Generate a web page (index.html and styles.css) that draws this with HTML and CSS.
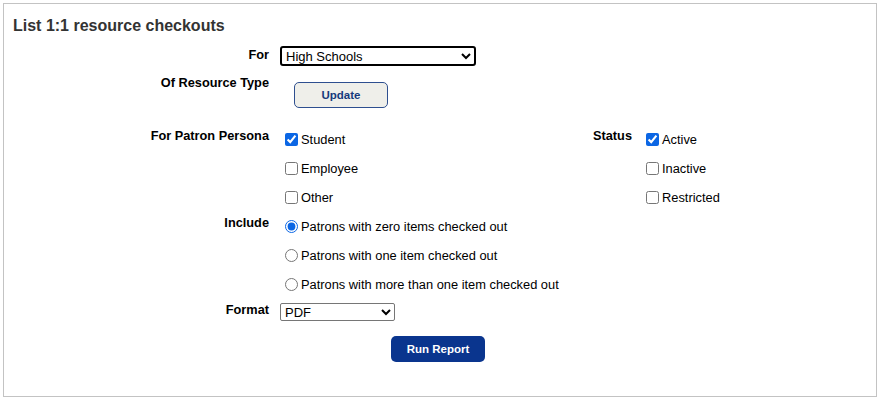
FILE: index.html
```html
<!DOCTYPE html>
<html>
<head>
<meta charset="utf-8">
<link rel="stylesheet" href="styles.css">
</head>
<body>
<div class="panel">
  <h1 class="title">List 1:1 resource checkouts</h1>
  <div class="form">
    <div class="row row-for">
      <div class="label lbl-for">For</div>
      <div class="field">
        <select class="sel sel-focus"><option>High Schools</option></select>
      </div>
    </div>
    <div class="row row-type">
      <div class="label lbl-type">Of Resource Type</div>
      <div class="field">
        <button class="btn-update">Update</button>
      </div>
    </div>
    <div class="row row-persona">
      <div class="label lbl-opt">For Patron Persona</div>
      <div class="opts opts-persona">
        <label class="opt"><input type="checkbox" checked>Student</label>
        <label class="opt"><input type="checkbox">Employee</label>
        <label class="opt"><input type="checkbox">Other</label>
      </div>
      <div class="label lbl-opt lbl-status">Status</div>
      <div class="opts opts-status">
        <label class="opt"><input type="checkbox" checked>Active</label>
        <label class="opt"><input type="checkbox">Inactive</label>
        <label class="opt"><input type="checkbox">Restricted</label>
      </div>
    </div>
    <div class="row row-include">
      <div class="label lbl-opt">Include</div>
      <div class="opts">
        <label class="opt"><input type="radio" name="inc" checked>Patrons with zero items checked out</label>
        <label class="opt"><input type="radio" name="inc">Patrons with one item checked out</label>
        <label class="opt"><input type="radio" name="inc">Patrons with more than one item checked out</label>
      </div>
    </div>
    <div class="row row-format">
      <div class="label lbl-format">Format</div>
      <div class="field">
        <select class="sel sel-format"><option>PDF</option></select>
      </div>
    </div>
    <div class="actions">
      <button class="btn-run">Run Report</button>
    </div>
  </div>
</div>
</body>
</html>
```

FILE: styles.css
```css
html, body {
  margin: 0;
  padding: 0;
  background: #ffffff;
}
body {
  padding: 3px 5px 0 3px;
  font-family: "Liberation Sans", Arial, sans-serif;
  color: #000;
}
.panel {
  border: 1px solid #c3c3c3;
  height: 394px;
  box-sizing: border-box;
  width: 874px;
}
.title {
  margin: 0;
  padding: 12px 0 0 9px;
  font-size: 16px;
  line-height: 20px;
  font-weight: bold;
  color: #333333;
}
.form {
  margin-top: 10px;
}
.row {
  display: flex;
  align-items: flex-start;
}
.label {
  width: 265px;
  flex: none;
  text-align: right;
  font-size: 12.75px;
  font-weight: bold;
  line-height: 14px;
  color: #000;
}
.field, .opts {
  margin-left: 11px;
}
.lbl-for { padding-top: 2px; }
.row-type { margin-top: 10px; }
.lbl-type { padding-top: 0; }
.row-persona { margin-top: 17px; }
.lbl-opt { padding-top: 4px; }
.opts-persona { width: 302px; flex: none; }
.lbl-status { width: auto; margin-left: 11px; }
.opts-status { margin-left: 9px; }
.opt {
  display: flex;
  align-items: center;
  height: 29px;
  font-size: 12.85px;
  line-height: 15px;
  color: #000;
}
.opt input {
  margin: 0 3px 0 5px;
  width: 13px;
  height: 13px;
  accent-color: #0b66e4;
}
.sel {
  font-family: "Liberation Sans", Arial, sans-serif;
  font-size: 13px;
  color: #000;
  background: #fff;
  padding: 0;
  box-sizing: border-box;
}
.sel-focus {
  width: 196px;
  height: 20px;
  border: 2px solid #000;
  border-radius: 3px;
  outline: none;
}
.btn-update {
  margin: 6px 0 0 14px;
  width: 94px;
  height: 26px;
  border: 1px solid #2e4f8f;
  border-radius: 5px;
  background: #efefea;
  color: #163a7c;
  font-family: "Liberation Sans", Arial, sans-serif;
  font-size: 11.5px;
  font-weight: bold;
  padding: 0;
}
.row-format { margin-top: 4px; }
.lbl-format { padding-top: 0; }
.sel-format {
  width: 115px;
  height: 18px;
  border: 1px solid #767676;
  border-radius: 2px;
}
.actions {
  display: flex;
  justify-content: center;
  margin-top: 15px;
  padding-right: 4px;
}
.btn-run {
  width: 94px;
  height: 26px;
  border: none;
  border-radius: 5px;
  background: #0a358e;
  color: #ffffff;
  font-family: "Liberation Sans", Arial, sans-serif;
  font-size: 11.5px;
  font-weight: bold;
  padding: 0;
}
```
